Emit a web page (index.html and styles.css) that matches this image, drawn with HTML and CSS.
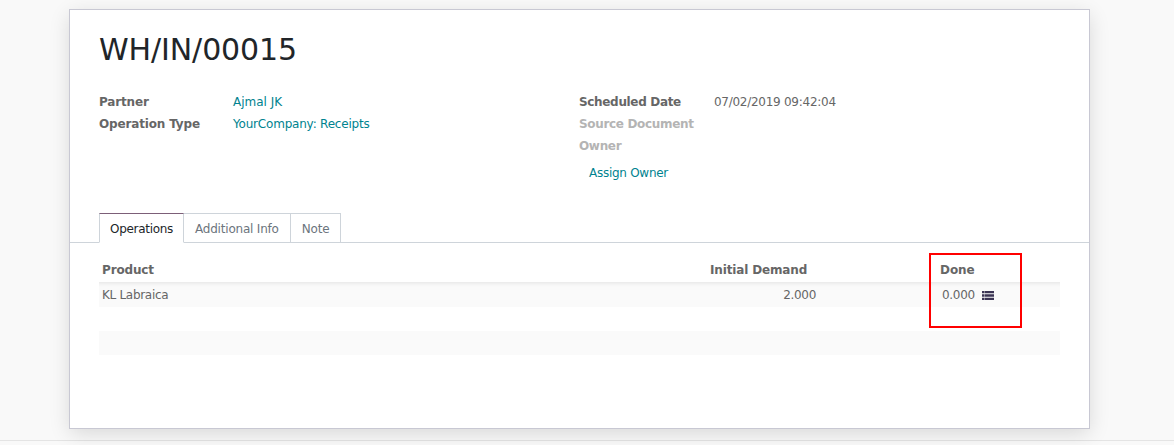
FILE: index.html
```html
<!DOCTYPE html>
<html lang="en">
<head>
<meta charset="utf-8">
<title>WH/IN/00015</title>
<link rel="stylesheet" href="styles.css">
</head>
<body>
<div class="page">
  <div class="sheet">
    <h1 class="title">WH/IN/00015</h1>
    <div class="groups">
      <div class="group">
        <div class="row"><span class="label">Partner</span><a class="link name">Ajmal JK</a></div>
        <div class="row"><span class="label">Operation Type</span><a class="link">YourCompany: Receipts</a></div>
      </div>
      <div class="group group-right">
        <div class="row"><span class="label">Scheduled Date</span><span class="value">07/02/2019 09:42:04</span></div>
        <div class="row"><span class="label muted">Source Document</span></div>
        <div class="row"><span class="label muted">Owner</span></div>
        <a class="link assign">Assign Owner</a>
      </div>
    </div>
    <div class="tabs">
      <span class="tab active">Operations</span>
      <span class="tab">Additional Info</span>
      <span class="tab">Note</span>
    </div>
    <div class="lines">
      <div class="line-head">
        <span class="col-product">Product</span>
        <span class="col-demand">Initial Demand</span>
        <span class="col-done">Done</span>
      </div>
      <div class="line-row">
        <span class="col-product">KL Labraica</span>
        <span class="col-demand">2.000</span>
        <span class="col-done done-cell">0.000
          <svg class="list-icon" width="12" height="9" viewBox="0 0 12 9" aria-hidden="true"><path d="M0 0h2.6v2.3H0zM3 0h9v2.3H3zM0 3.3h2.6v2.4H0zM3 3.3h9v2.4H3zM0 6.7h2.6V9H0zM3 6.7h9V9H3z"/></svg>
        </span>
      </div>
      <div class="line-empty"></div>
      <div class="line-striped"></div>
    </div>
    <div class="highlight"></div>
  </div>
</div>
</body>
</html>
```
FILE: styles.css
```css
* { box-sizing: border-box; }
html, body { margin: 0; height: 445px; overflow: hidden; background: #f9f9f9; }
body { font-family: "DejaVu Sans", sans-serif; font-size: 12px; letter-spacing: -0.2px; color: #4c4c4c; }
.page { height: 441px; padding: 9px 0 0 69px; border-bottom: 1px solid #e4e4e4; }
.sheet {
  position: relative;
  width: 1021px;
  height: 420px;
  background: #fff;
  border: 1px solid #c8c8d3;
  box-shadow: 0 5px 20px -1px rgba(0, 0, 0, 0.14);
}
.title {
  margin: 0;
  padding: 22px 0 0 29px;
  height: 72px;
  font-size: 30px;
  line-height: 36px;
  font-weight: 400;
  letter-spacing: -0.1px;
  color: #212529;
}
.groups { display: flex; padding: 9px 0 0 29px; height: 131px; }
.group { width: 480px; }
.row { display: flex; height: 22px; line-height: 22px; }
.label { width: 134px; font-weight: 700; letter-spacing: -0.15px; color: #666; white-space: nowrap; }
.group-right .label { width: 135px; letter-spacing: -0.33px; }
.muted { color: #b4b4b4; }
.value { color: #666; letter-spacing: -0.27px; }
.link { color: #00838f; }
.name { letter-spacing: 0; }
.assign { display: block; margin: 5px 0 0 10px; line-height: 22px; letter-spacing: -0.27px; }
.tabs { display: flex; height: 30px; padding-left: 29px; border-bottom: 1px solid #ced4da; }
.tab {
  height: 30px;
  padding: 0 11px;
  line-height: 30px;
  color: #6c757d;
  background: #fff;
  border: 1px solid #ced4da;
  border-left-width: 0;
}
.tab:first-child { padding: 0 10px; border-left-width: 1px; letter-spacing: -0.3px; }
.tab.active { color: #212529; border-top-color: #7c5f78; border-bottom-color: #fff; }
.lines { margin: 15px 29px 0; }
.line-head, .line-row { display: flex; line-height: 24px; padding-left: 3px; white-space: nowrap; }
.line-head { height: 24px; font-weight: 700; letter-spacing: -0.15px; color: #666; }
.line-row { height: 25px; line-height: 26px; background: #fafafa; box-shadow: inset 0 5px 4px -4px #e2e2e2; color: #666; letter-spacing: -0.3px; }
.col-product { flex: 0 0 608px; }
.col-demand { flex: 0 0 106px; text-align: right; }
.line-head .col-demand { flex-basis: 97px; }
.col-done { margin-left: 133px; }
.line-row .col-done { margin-left: 126px; }
.done-cell { display: flex; align-items: center; gap: 7px; height: 25px; }
.list-icon { fill: #3b3454; margin-top: 1px; }
.line-empty { height: 24px; }
.line-striped { height: 24px; background: #fafafa; }
.highlight {
  position: absolute;
  left: 859px;
  top: 243px;
  width: 93px;
  height: 75px;
  border: 2px solid #f00;
}
```
